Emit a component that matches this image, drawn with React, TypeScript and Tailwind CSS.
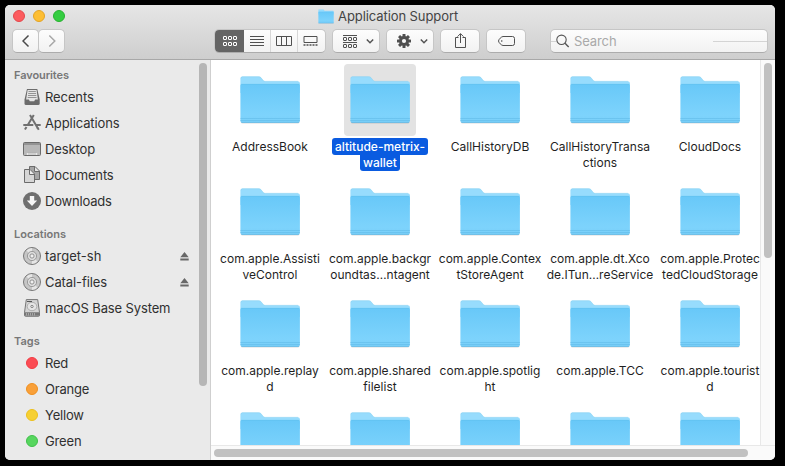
import React from "react";

const FONT = "font-['Inter','Liberation_Sans',sans-serif]";

function Folder({ className, id }: { className?: string; id: string }) {
  return (
    <svg className={className} viewBox="-0.4 0 62 50" preserveAspectRatio="none" fill="none">
      <defs>
        <linearGradient id={id} x1="0" y1="0" x2="0" y2="1">
          <stop offset="0" stopColor="#68c8f8" />
          <stop offset="0.8" stopColor="#7dd3fc" />
          <stop offset="1" stopColor="#79cff9" />
        </linearGradient>
      </defs>
      <path d="M1.5 46.5h58.500v1a1.6 1.6 0 0 1-1.6 1.1H3a1.6 1.6 0 0 1-1.5-1.1z" fill="#000" fillOpacity=".14" />
      <path d="M1 3.5A2 2 0 0 1 3 1.6h16.3c1 0 1.7.3 2.3 1l2.2 2.7c.5.6 1.1.9 2 .9H58.5A2 2 0 0 1 60.5 8v10H1z" fill="#97dcfd" />
      <path d="M1.5 3.3A2 2 0 0 1 3 1.7h16.3c1 0 1.7.3 2.3 1l2.2 2.7c.5.6 1.1.9 2 .9H58.5" stroke="#86cfee" strokeWidth=".4" />
      <path d="M1 10.5a1.6 1.6 0 0 1 1.6-1.5H59a1.6 1.6 0 0 1 1.5 1.5V46a1.8 1.8 0 0 1-1.8 1.7H2.8A1.8 1.8 0 0 1 1 46z" fill={`url(#${id})`} />
      <path d="M1.5 9.3h58.5" stroke="#5fbdea" strokeWidth=".5" />
      <path d="M1 43.500h59.5M1 45.500h59.5" stroke="#5db7e5" strokeWidth=".5" />
      <path d="M2 47.4h57.5" stroke="#55aede" strokeWidth=".6" />
    </svg>
  );
}

const buttonLook =
  "h-6 rounded-[5px] border border-[#c6c6c6] border-b-[#acacac] bg-linear-to-b from-[#fdfdfd] to-[#f2f2f2] flex items-center";

function Chevron() {
  return (
    <svg className="h-2 w-2" viewBox="0 0 8 8" fill="none" stroke="#555" strokeWidth="1.5">
      <path d="M.8 2.5 4 5.7l3.2-3.2" />
    </svg>
  );
}

function Squares({ y }: { y: number }) {
  return (
    <>
      {[0.5, 5.5, 10.5].map((x) => (
        <rect key={x} x={x} y={y} width="3" height="3" rx=".4" />
      ))}
    </>
  );
}

function Toolbar() {
  return (
    <div className="flex h-6 pl-[7px]">
      <div className={`${buttonLook} w-[27px] justify-center`}>
        <svg viewBox="0 0 8 14" width="8" height="14" fill="none" stroke="#4a4a4a" strokeWidth="1.5">
          <path d="M6.5 1.5 1 7 6.5 12.5" />
        </svg>
      </div>
      <div className={`${buttonLook} -ml-px w-[27px] justify-center`}>
        <svg viewBox="0 0 8 14" width="8" height="14" fill="none" stroke="#a8a8a8" strokeWidth="1.5">
          <path d="M1.3 1.5 6.8 7 1.3 12.5" />
        </svg>
      </div>
      <div className={`${buttonLook} ml-[149px] w-[112px] overflow-hidden`}>
        <div className="-my-px -ml-px flex h-6 w-[30px] shrink-0 items-center justify-center bg-[#646464] pl-[2px]">
          <svg width="14" height="10" viewBox="0 0 14 10" fill="none" stroke="#fff">
            <Squares y={0.5} />
            <Squares y={6.5} />
          </svg>
        </div>
        <div className="flex h-full w-[27px] items-center justify-center border-r border-[#d7d7d7]">
          <svg width="14" height="10" viewBox="0 0 14 10" stroke="#505050">
            <path d="M0 .5h14M0 3.5h14M0 6.5h14M0 9.5h14" />
          </svg>
        </div>
        <div className="flex h-full w-[27px] items-center justify-center border-r border-[#d7d7d7]">
          <svg width="16" height="10" viewBox="0 0 16 10" fill="none" stroke="#505050">
            <path d="M.5.5h15v9H.5zM5.5.5v9M10.5.5v9" />
          </svg>
        </div>
        <div className="flex h-full flex-1 items-center justify-center pr-[2px]">
          <svg width="15" height="10" viewBox="0 0 15 10" fill="none" stroke="#505050">
            <path d="M1 .5h13v6H1z" />
            <path d="M.5 9h14" strokeWidth="1.6" strokeDasharray="2 1" />
          </svg>
        </div>
      </div>
      <div className={`${buttonLook} ml-[6px] w-[48px] justify-between pr-[5px] pl-[10px]`}>
        <svg width="14" height="14" viewBox="0 0 14 14" fill="none" stroke="#505050">
          <path d="M0 1.5h14M0 8.5h14" />
          <Squares y={3.5} />
          <Squares y={10.5} />
        </svg>
        <Chevron />
      </div>
      <div className={`${buttonLook} ml-[6px] w-[48px] justify-between pr-[5px] pl-[9px]`}>
        <svg width="16" height="16" viewBox="-8 -8 16 16">
          {[0, 45, 90, 135].map((a) => (
            <rect key={a} x="-1.5" y="-7" width="3" height="14" rx=".5" fill="#4f4f4f" transform={`rotate(${a})`} />
          ))}
          <circle r="4.9" fill="#4f4f4f" />
          <circle r="2.1" fill="#f7f7f7" />
        </svg>
        <Chevron />
      </div>
      <div className={`${buttonLook} ml-[6px] w-10 justify-center`}>
        <svg width="14" height="16" viewBox="0 0 14 16" fill="none" stroke="#505050">
          <path d="M5.5 4.5h-3v10h10v-10h-3M7.5 10V.8M4.5 3.6l3-3 3 3" />
        </svg>
      </div>
      <div className={`${buttonLook} ml-[6px] w-10 justify-center`}>
        <svg width="18" height="10" viewBox="0 0 18 10" fill="none" stroke="#505050">
          <path d="M6 .5h9.5a2 2 0 0 1 2 2v5a2 2 0 0 1-2 2H6C4.5 9.5 1.5 6.5 1.500 5S4.500.5 6 .5z" />
          <circle cx="4.8" cy="5" r=".4" />
        </svg>
      </div>
      <div className={`${buttonLook} ml-[24px] w-[218px]`}>
        <div className="h-px w-[5px] bg-[#d4d4d4]" />
        <svg width="14" height="14" viewBox="0 0 14 14" fill="none" stroke="#555" strokeWidth="1.1">
          <circle cx="5.5" cy="5.8" r="4.7" />
          <path d="m9 9.3 3.7 3.7" strokeWidth="1.4" />
        </svg>
        <span className="ml-1 w-[139px] text-[13px] leading-5 tracking-[-0.1px] text-[#a9a9a9]">Search</span>
        <div className="h-px flex-1 bg-[#d4d4d4]" />
      </div>
    </div>
  );
}

function RecentsIcon() {
  return (
    <svg width="18" height="18" viewBox="0 0 18 18" fill="none">
      <path d="M4 1h10.3L16.7 11.5v4a1.5 1.5 0 0 1-1.5 1.5H3a1.5 1.5 0 0 1-1.5-1.5v-4z" fill="#6c6c6c" />
      <path d="M4.6 2h9l1.3 9.4h-2.7l-1 1.800H6.800l-1-1.800H3.100z" fill="#e4e4e4" />
      <path d="M5.5 3.5h7.3M5.2 5.5h7.9M5 7.5h8.3M4.7 9.5h8.9" stroke="#8a8a8a" strokeWidth=".9" />
    </svg>
  );
}

function ApplicationsIcon() {
  return (
    <svg width="18" height="18" viewBox="0 0 18 18" fill="none" stroke="#707070" strokeWidth="2">
      <path d="m10.8 1-5.9 9.8M7 1l7.8 13.3M.3 11h10M12.8 11h4.9" />
      <path d="m3.5 13-1.6 2.6M14.3 13.5l1.5 2.3" />
    </svg>
  );
}

function DesktopIcon() {
  return (
    <svg width="18" height="18" viewBox="0 0 18 18">
      <rect x=".5" y="2.5" width="17" height="13" rx="1" fill="#b8b8b8" stroke="#6b6b6b" />
      <path d="M1 4h16" stroke="#707070" strokeWidth="1" />
      <path d="M3.8 15v-2h10.4v2" fill="#e8e8e8" />
      <path d="M6 12.5V15m2-2.5V15m2-2.5V15m2-2.5V15" stroke="#999" strokeWidth=".6" />
    </svg>
  );
}

function DocumentsIcon() {
  return (
    <svg width="18" height="18" viewBox="0 0 18 18" stroke="#6b6b6b">
      <path d="M6.5.5H12L16.500 5v8.500h-10z" fill="#a5a5a5" />
      <path d="M11.5.8v4.700h4.800" fill="#e6e6e6" />
      <path d="M1.5 3.5H7L11.500 8v8.500h-10z" fill="#d6d6d6" />
      <path d="M6.5 3.8v4.700h4.700" fill="#eee" />
    </svg>
  );
}

function DownloadsIcon() {
  return (
    <svg width="18" height="18" viewBox="0 0 18 18">
      <circle cx="9" cy="9" r="9" fill="#6f6f6f" />
      <path d="M6.8 4h4.4v4.5h3L9 14 3.8 8.5h3z" fill="#f5f5f5" />
    </svg>
  );
}

function DiscIcon() {
  return (
    <svg width="18" height="18" viewBox="0 0 18 18" fill="none">
      <circle cx="9" cy="9" r="8.5" fill="#c6c6c6" stroke="#777" />
      <path d="M9 9 3.5 3.5A8 8 0 0 1 9 1zM9 9l5.5 5.5A8 8 0 0 1 9 17z" fill="#e6e6e6" />
      <circle cx="9" cy="9" r="4.6" fill="#ddd" stroke="#8c8c8c" strokeWidth=".8" />
      <circle cx="9" cy="9" r="2.1" fill="#f0f0f0" stroke="#888" strokeWidth=".9" />
    </svg>
  );
}

function DriveIcon() {
  return (
    <svg width="18" height="18" viewBox="0 0 18 18" fill="none">
      <path d="M3.3.6h11.400l1.800 12.700v3a1 1 0 0 1-1 1h-13a1 1 0 0 1-1-1v-3z" fill="#d4d4d4" stroke="#777" />
      <path d="M1.5 13.3h15v3.5h-15z" fill="#777" />
      <path d="M3.5 14v2.5m2-2.5v2.5m2-2.5v2.5m2-2.5v2.5m2-2.5v2.5" stroke="#bbb" strokeWidth=".7" />
      <ellipse cx="9" cy="7.5" rx="4.8" ry="4.2" fill="#e4e4e4" stroke="#999" strokeWidth=".7" />
      <ellipse cx="9" cy="7.5" rx="1.3" ry="1.1" stroke="#777" strokeWidth=".8" />
      <path d="M4 2.5h5" stroke="#555" />
    </svg>
  );
}

function Eject() {
  return (
    <svg className="ml-auto" width="9" height="9" viewBox="0 0 9 9" fill="#686868">
      <path d="M4.500 0 8.700 5.200H.3zM.3 6.500h8.400v2H.3z" />
    </svg>
  );
}

function Row({ icon, label, eject, spacing = "" }: { icon: React.ReactNode; label: string; eject?: boolean; spacing?: string }) {
  return (
    <div className="flex h-[26px] items-center pr-[9px] pl-[18px]">
      <div className="flex w-[18px] justify-center">{icon}</div>
      <span className={`ml-1 text-[13px] leading-5 whitespace-nowrap text-[#303030] ${spacing}`}>{label}</span>
      {eject && <Eject />}
    </div>
  );
}

function Heading({ children, className = "" }: { children: string; className?: string }) {
  return (
    <div className={`h-[18px] pl-[9px] text-[11px] leading-[18px] font-semibold text-[#777] ${className}`}>{children}</div>
  );
}

function Dot({ className }: { className: string }) {
  return <div className={`h-3 w-3 rounded-full border ${className}`} />;
}

function Sidebar() {
  return (
    <div className="flex w-[206px] shrink-0 border-r border-[#cfcfcf] bg-[#eaeaea]">
      <div className="w-[193px] pt-1.5">
        <Heading className="tracking-[-0.08px]">Favourites</Heading>
        <Row icon={<RecentsIcon />} label="Recents" spacing="tracking-[-0.1px]" />
        <Row icon={<ApplicationsIcon />} label="Applications" spacing="tracking-[-0.1px]" />
        <Row icon={<DesktopIcon />} label="Desktop" spacing="tracking-[-0.1px]" />
        <Row icon={<DocumentsIcon />} label="Documents" spacing="tracking-[-0.15px]" />
        <Row icon={<DownloadsIcon />} label="Downloads" spacing="tracking-[-0.2px]" />
        <Heading className="mt-[11px]">Locations</Heading>
        <Row icon={<DiscIcon />} label="target-sh" eject />
        <Row icon={<DiscIcon />} label="Catal-files" eject spacing="tracking-[-0.1px]" />
        <Row icon={<DriveIcon />} label="macOS Base System" spacing="tracking-[-0.13px]" />
        <Heading className="mt-[11px]">Tags</Heading>
        <Row icon={<Dot className="border-[#f23c43] bg-[#fb4c54]" />} label="Red" spacing="tracking-[-0.2px]" />
        <Row icon={<Dot className="border-[#ef9020] bg-[#f9a039]" />} label="Orange" spacing="tracking-[-0.2px]" />
        <Row icon={<Dot className="border-[#ecc01c] bg-[#f6d033]" />} label="Yellow" spacing="tracking-[-0.2px]" />
        <Row icon={<Dot className="border-[#40c04a] bg-[#57d65f]" />} label="Green" spacing="tracking-[-0.15px]" />
      </div>
      <div className="mt-[3px] ml-px h-[323px] w-2 rounded-full bg-[#b6b6b6]" />
    </div>
  );
}

const files: string[][] = [
  ["AddressBook"],
  ["altitude-metrix-", "wallet"],
  ["CallHistoryDB"],
  ["CallHistoryTransa", "ctions"],
  ["CloudDocs"],
  ["com.apple.Assisti", "veControl"],
  ["com.apple.backgr", "oundtas…ntagent"],
  ["com.apple.Contex", "tStoreAgent"],
  ["com.apple.dt.Xco", "de.ITun…reService"],
  ["com.apple.Protec", "tedCloudStorage"],
  ["com.apple.replay", "d"],
  ["com.apple.shared", "filelist"],
  ["com.apple.spotlig", "ht"],
  ["com.apple.TCC"],
  ["com.apple.tourist", "d"],
  [],
  [],
  [],
  [],
  [],
];

function FileGrid() {
  return (
    <div className="grid h-[385px] w-[549px] auto-rows-[112px] grid-cols-[repeat(5,110px)] overflow-hidden bg-white pt-1 pl-1">
      {files.map((lines, i) => {
        const selected = i === 1;
        return (
          <div key={i} className="flex flex-col items-center">
            <div className={`flex h-[72px] w-[72px] shrink-0 justify-center rounded-[4px] pt-[11px] ${selected ? "bg-[#e3e3e3]" : ""}`}>
              <Folder id={`folder-${i}`} className="h-[50px] w-[62px]" />
            </div>
            <div className="mt-[2px] flex flex-col items-center">
              {lines.map((line, n) => (
                <span
                  key={n}
                  className={`text-[12px] leading-4 whitespace-nowrap ${
                    selected
                      ? `bg-[#0a5be0] px-[3px] font-medium text-white ${
                          n === 0 ? "h-[17px] rounded-[3px] leading-[18px]" : "h-4 rounded-b-[3px]"
                        }`
                      : `h-4 text-[#1f1f1f] ${n === 0 ? "mt-px" : ""}`
                  }`}
                >
                  {line}
                </span>
              ))}
            </div>
          </div>
        );
      })}
    </div>
  );
}

export default function App() {
  return (
    <div className={`h-[466px] w-[785px] overflow-hidden bg-black p-[5px] antialiased ${FONT}`}>
      <div className="flex h-[455px] w-[770px] flex-col overflow-hidden rounded-[5px] bg-white">
        <div className="h-[55px] shrink-0 border-b border-[#a8a8a8] bg-linear-to-b from-[#e6e6e6] to-[#cecece]">
          <div className="flex h-6 items-center">
            <div className="flex w-[313px] gap-2 pb-[2px] pl-2">
              <Dot className="border-[#e2484c] bg-[#fc5b5e]" />
              <Dot className="border-[#e2a325] bg-[#fdbe33]" />
              <Dot className="border-[#27b130] bg-[#34cd41]" />
            </div>
            <Folder id="title-folder" className="mb-[2px] h-[15px] w-4" />
            <span className="ml-1 text-[13px] tracking-[-0.08px] text-[#444]">Application Support</span>
          </div>
          <Toolbar />
        </div>
        <div className="flex min-h-0 flex-1">
          <Sidebar />
          <div className="flex flex-1 flex-col bg-[#fafafa]">
            <div className="flex">
              <FileGrid />
              <div className="flex flex-1 justify-center border-l border-[#e8e8e8] pt-[3px]">
                <div className="h-[195px] w-2 rounded-full bg-[#c1c1c1]" />
              </div>
            </div>
            <div className="h-[15px] border-t border-[#e8e8e8] pt-[3px] pl-[3px]">
              <div className="h-2 w-[534px] rounded-full bg-[#c1c1c1]" />
            </div>
          </div>
        </div>
      </div>
    </div>
  );
}
